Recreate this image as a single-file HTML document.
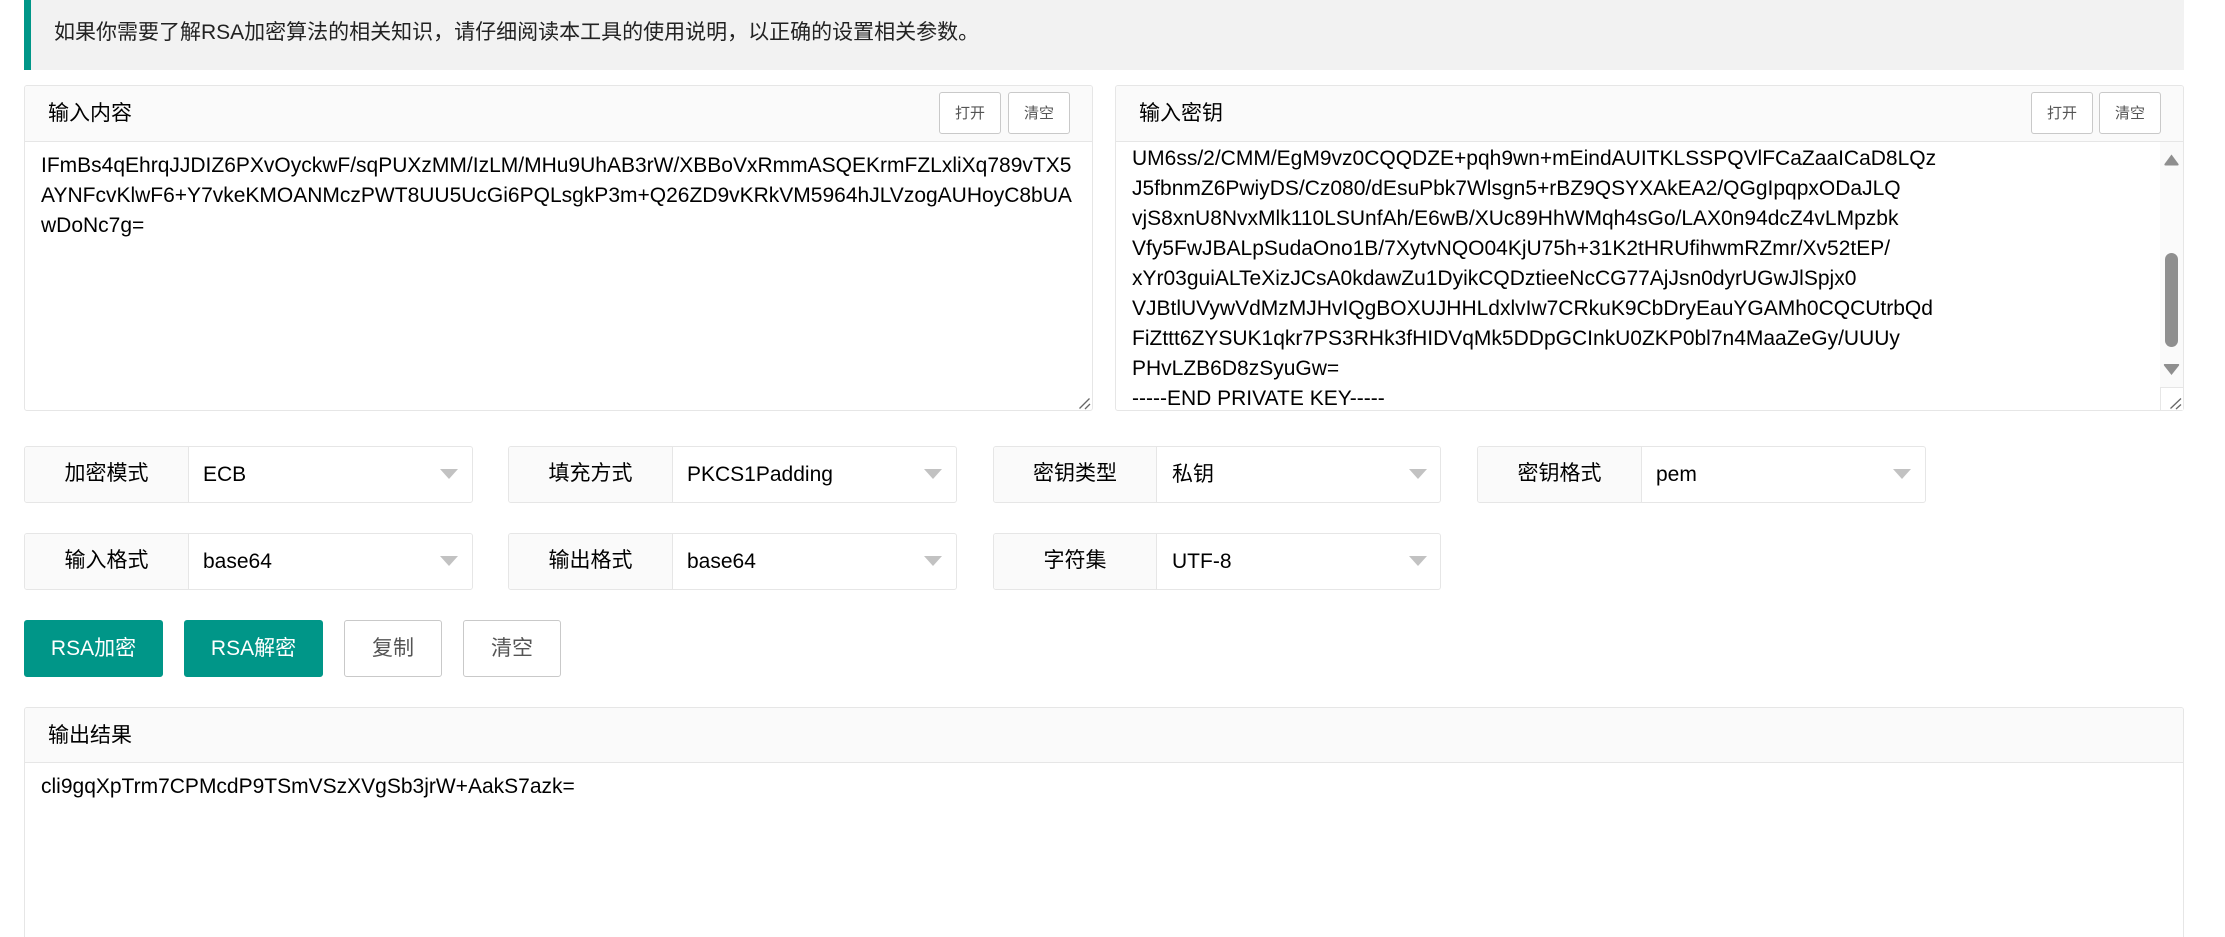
<!DOCTYPE html>
<html lang="zh-CN">
<head>
<meta charset="utf-8">
<title>RSA</title>
<style>
html,body{margin:0;padding:0;background:#fff;width:2225px;height:937px;overflow:hidden}
body{position:relative;font-family:"Liberation Sans","Noto Sans CJK SC",sans-serif;color:#000;font-size:21px}
.a{position:absolute;box-sizing:border-box;white-space:nowrap}
.notice{left:24px;top:0;width:2160px;height:70px;background:#f2f2f2;border-left:7px solid #009688}
.notice span{position:absolute;left:23px;top:18px;line-height:30px;font-size:21px;color:#222}
.panel{background:#fff;border:1px solid #e6e6e6;border-radius:3px;overflow:hidden}
.head{position:absolute;box-sizing:border-box;left:0;top:0;right:0;height:56px;background:#fafafa;border-bottom:1px solid #e6e6e6;font-size:21px;line-height:56px;padding-left:23px}
.ln{position:absolute;font-size:21px;line-height:30px;white-space:nowrap;color:#000}
.mini{top:92px;width:62px;height:42px;background:#fff;border:1px solid #c9c9c9;border-radius:3px;color:#555;font-size:15px;line-height:41px;text-align:center}
.group{width:449px;height:57px;background:#fff;border:1px solid #e6e6e6;border-radius:3px}
.group b{position:absolute;box-sizing:border-box;left:0;top:0;bottom:0;width:164px;background:#fafafa;border-right:1px solid #e6e6e6;font-weight:normal;font-size:21px;line-height:54px;text-align:center;border-radius:3px 0 0 3px}
.group i{position:absolute;left:178px;top:0;font-style:normal;font-size:21px;line-height:56px}
.group u{position:absolute;left:415px;top:22px;width:0;height:0;border-left:9px solid transparent;border-right:9px solid transparent;border-top:10px solid #c2c2c2}
.btn{top:620px;height:57px;border-radius:3px;font-size:21px;line-height:56px;text-align:center}
.p{background:#009688;color:#fff;border:1px solid #009688;width:139px}
.d{background:#fff;color:#555;border:1px solid #c9c9c9;width:98px}
</style>
</head>
<body>
<div class="a notice"><span>如果你需要了解RSA加密算法的相关知识，请仔细阅读本工具的使用说明，以正确的设置相关参数。</span></div>

<div class="a panel" style="left:24px;top:85px;width:1069px;height:326px">
  <div class="head">输入内容</div>
  <div class="ln" style="left:16px;top:65px">IFmBs4qEhrqJJDIZ6PXvOyckwF/sqPUXzMM/IzLM/MHu9UhAB3rW/XBBoVxRmmASQEKrmFZLxliXq789vTX5</div>
  <div class="ln" style="left:16px;top:95px">AYNFcvKlwF6+Y7vkeKMOANMczPWT8UU5UcGi6PQLsgkP3m+Q26ZD9vKRkVM5964hJLVzogAUHoyC8bUA</div>
  <div class="ln" style="left:16px;top:125px">wDoNc7g=</div>
</div>
<div class="a mini" style="left:939px">打开</div>
<div class="a mini" style="left:1008px">清空</div>

<div class="a panel" style="left:1115px;top:85px;width:1069px;height:326px">
  <div class="head">输入密钥</div>
  <div class="ln" style="left:16px;top:58px">UM6ss/2/CMM/EgM9vz0CQQDZE+pqh9wn+mEindAUITKLSSPQVlFCaZaaICaD8LQz</div>
  <div class="ln" style="left:16px;top:88px">J5fbnmZ6PwiyDS/Cz080/dEsuPbk7Wlsgn5+rBZ9QSYXAkEA2/QGgIpqpxODaJLQ</div>
  <div class="ln" style="left:16px;top:118px">vjS8xnU8NvxMlk110LSUnfAh/E6wB/XUc89HhWMqh4sGo/LAX0n94dcZ4vLMpzbk</div>
  <div class="ln" style="left:16px;top:148px">Vfy5FwJBALpSudaOno1B/7XytvNQO04KjU75h+31K2tHRUfihwmRZmr/Xv52tEP/</div>
  <div class="ln" style="left:16px;top:178px">xYr03guiALTeXizJCsA0kdawZu1DyikCQDztieeNcCG77AjJsn0dyrUGwJlSpjx0</div>
  <div class="ln" style="left:16px;top:208px">VJBtlUVywVdMzMJHvIQgBOXUJHHLdxlvIw7CRkuK9CbDryEauYGAMh0CQCUtrbQd</div>
  <div class="ln" style="left:16px;top:238px">FiZttt6ZYSUK1qkr7PS3RHk3fHIDVqMk5DDpGCInkU0ZKP0bl7n4MaaZeGy/UUUy</div>
  <div class="ln" style="left:16px;top:268px">PHvLZB6D8zSyuGw=</div>
  <div class="ln" style="left:16px;top:298px">-----END PRIVATE KEY-----</div>
</div>
<div class="a mini" style="left:2031px">打开</div>
<div class="a mini" style="left:2099px">清空</div>
<div class="a" style="left:2160px;top:142px;width:23px;height:245px;background:#fafafa"></div>
<div class="a" style="left:2160px;top:387px;width:23px;height:23px;background:#fff;border-left:1px solid #e6e6e6;border-top:1px solid #e6e6e6"></div>
<div class="a" style="left:2165px;top:253px;width:13px;height:94px;background:#8f8f8f;border-radius:7px"></div>

<svg class="a" style="left:0;top:0" width="2225" height="937" viewBox="0 0 2225 937">
  <path d="M2171.5 154.5 L2178.5 164 Q2179 165.5 2177.5 165.5 L2165.5 165.5 Q2164 165.5 2164.5 164 Z" fill="#8f8f8f"/>
  <path d="M2164.5 364 L2178.5 364 Q2179.5 364 2179 365.5 L2171.5 375 L2164 365.5 Q2163.5 364 2164.5 364 Z" fill="#8f8f8f"/>
  <g stroke="#666" stroke-width="1.3" fill="none">
    <path d="M1079.5 408.5 L1089.5 398.5 M1085 409 L1090 404"/>
    <path d="M2170.5 408.5 L2181 398.5 M2176 409 L2181 404.5"/>
  </g>
</svg>

<div class="a group" style="left:24px;top:446px"><b>加密模式</b><i>ECB</i><u></u></div>
<div class="a group" style="left:508px;top:446px"><b>填充方式</b><i>PKCS1Padding</i><u></u></div>
<div class="a group" style="left:993px;top:446px;width:448px"><b style="width:163px">密钥类型</b><i>私钥</i><u></u></div>
<div class="a group" style="left:1477px;top:446px"><b>密钥格式</b><i>pem</i><u></u></div>
<div class="a group" style="left:24px;top:533px"><b>输入格式</b><i>base64</i><u></u></div>
<div class="a group" style="left:508px;top:533px"><b>输出格式</b><i>base64</i><u></u></div>
<div class="a group" style="left:993px;top:533px;width:448px"><b style="width:163px">字符集</b><i>UTF-8</i><u></u></div>

<div class="a btn p" style="left:24px">RSA加密</div>
<div class="a btn p" style="left:184px">RSA解密</div>
<div class="a btn d" style="left:344px">复制</div>
<div class="a btn d" style="left:463px">清空</div>

<div class="a panel" style="left:24px;top:707px;width:2160px;height:230px;border-bottom:none;border-radius:3px 3px 0 0">
  <div class="head" style="height:55px">输出结果</div>
  <div class="ln" style="left:16px;top:64px">cli9gqXpTrm7CPMcdP9TSmVSzXVgSb3jrW+AakS7azk=</div>
</div>
</body>
</html>
